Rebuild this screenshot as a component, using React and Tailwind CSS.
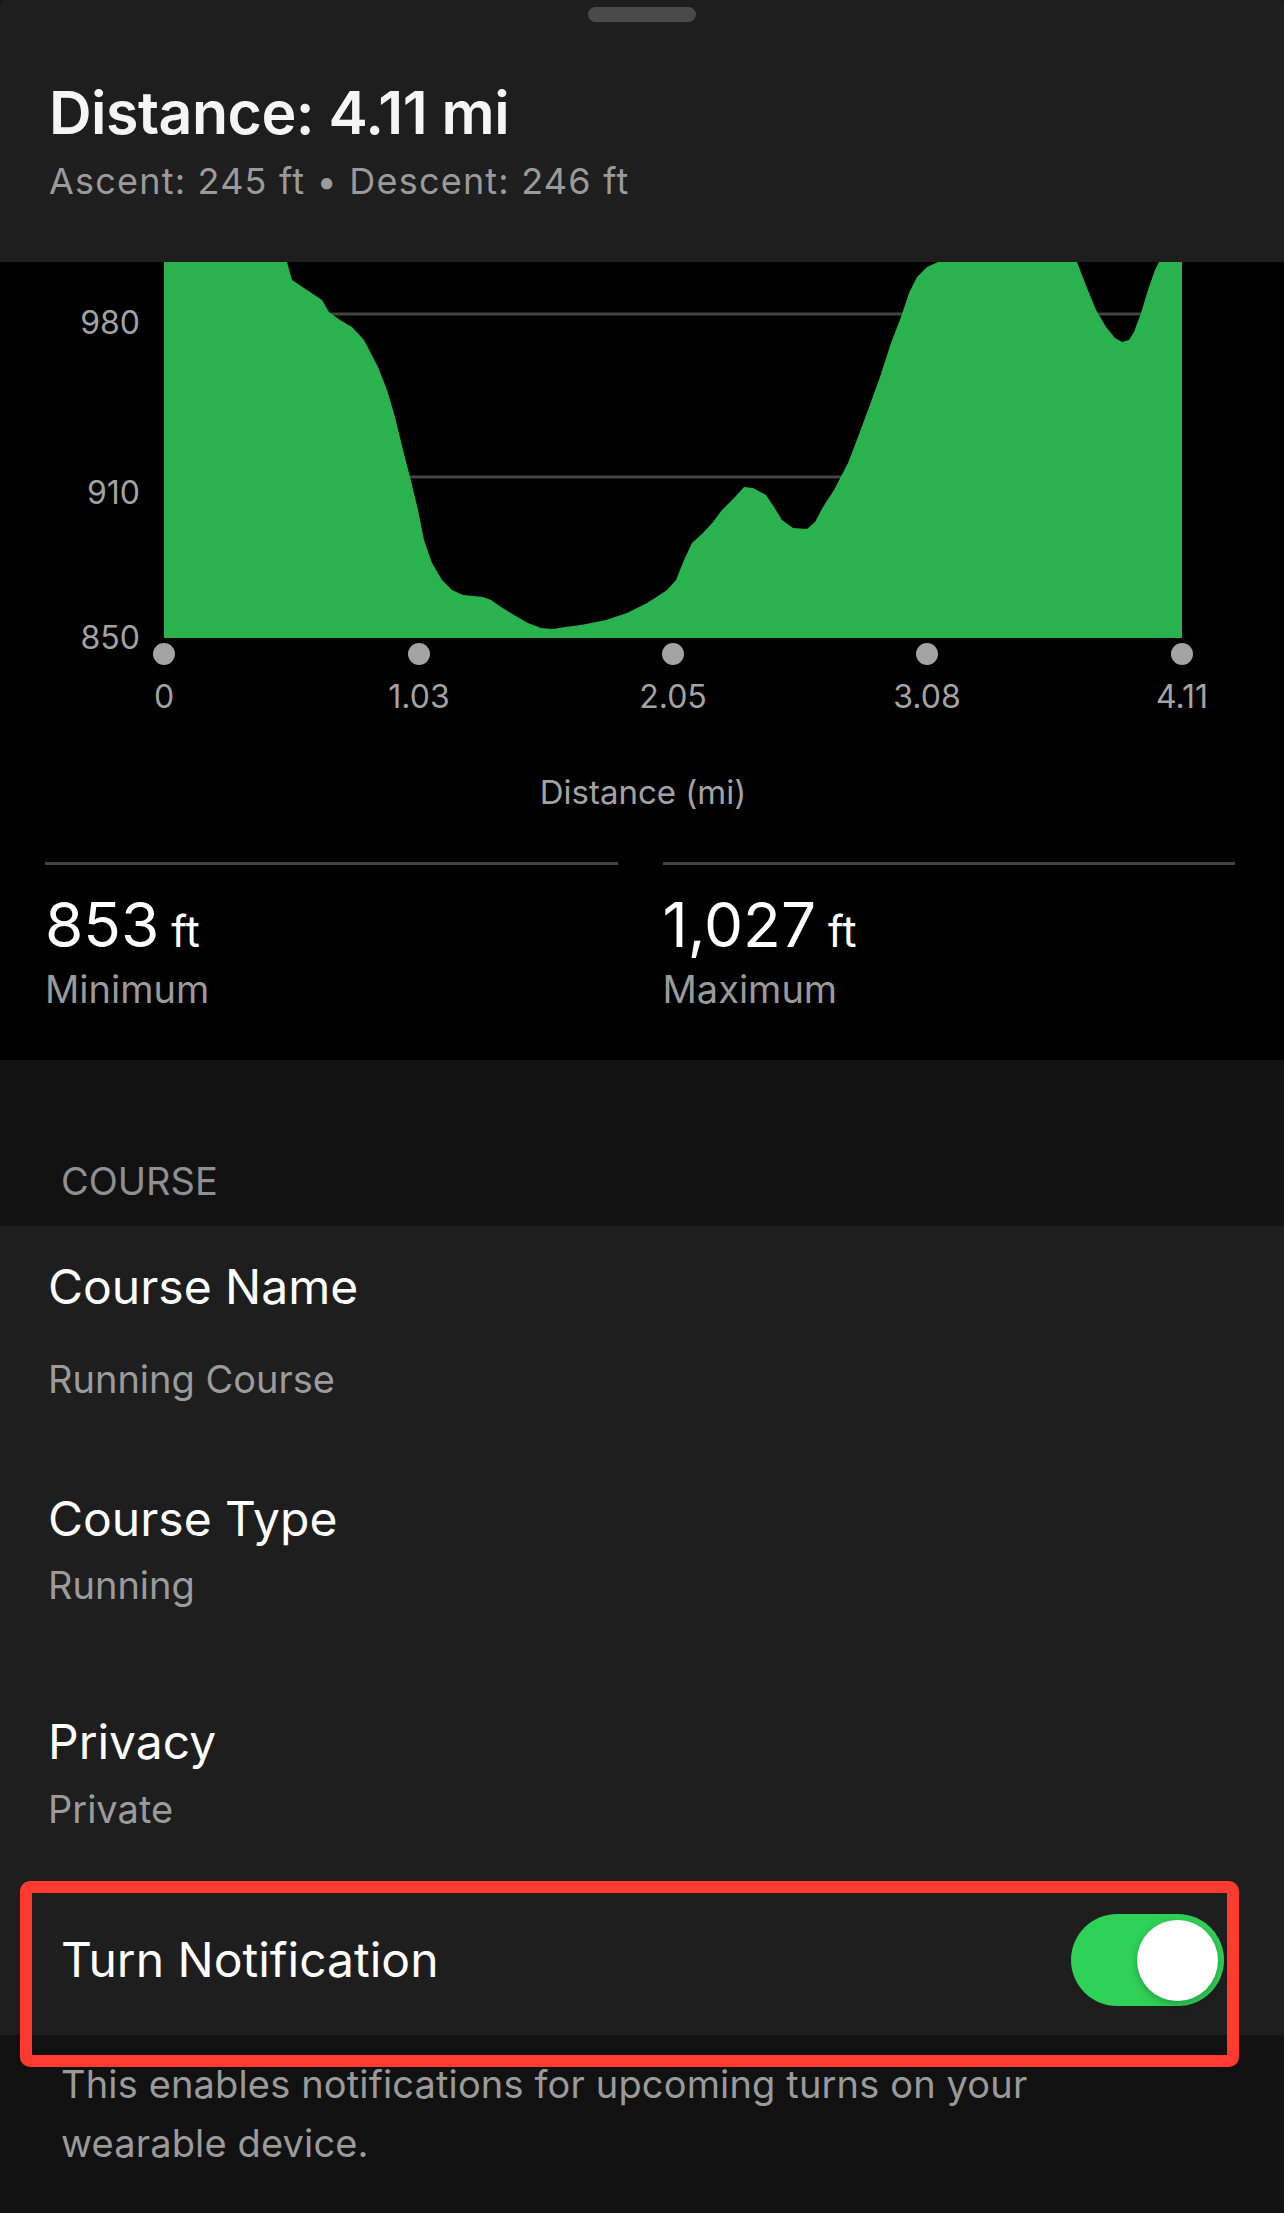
import React from "react";

const PTS = [
  [287, 262], [292, 280], [307, 290], [322, 300], [329, 312], [340, 320], [352, 327],
  [364, 340], [378, 367], [387, 390], [395, 417], [403, 450], [410, 477], [418, 510],
  [424, 540], [432, 563], [442, 580], [452, 590], [463, 595], [483, 597], [491, 600],
  [501, 607], [514, 615], [528, 623], [541, 628], [553, 629], [565, 627], [581, 625],
  [606, 620], [627, 613], [647, 603], [655, 598], [667, 590], [676, 580], [684, 560],
  [692, 543], [703, 533], [713, 522], [722, 510], [735, 497], [744, 487], [753, 488],
  [766, 495], [774, 507], [782, 520], [793, 528], [807, 529], [815, 522], [823, 507],
  [834, 490], [848, 463], [858, 437], [868, 410], [880, 377], [891, 343], [901, 317],
  [909, 293], [917, 277], [927, 267], [938, 262],
  [1077, 262], [1085, 283], [1096, 310], [1106, 327], [1115, 338], [1122, 342],
  [1129, 340], [1134, 332], [1141, 313], [1148, 290], [1155, 270], [1159, 262],
];

const TOP = 262;
const areaPath =
  "M164 376 L164 0 " +
  PTS.map(([x, y]) => `L${x} ${y - TOP}`).join(" ") +
  " L1182 0 L1182 376 Z";

const xTicks = [
  { x: 164, label: "0" },
  { x: 419, label: "1.03" },
  { x: 673, label: "2.05" },
  { x: 927, label: "3.08" },
  { x: 1182, label: "4.11" },
];

function ElevationChart() {
  return (
    <svg width="1284" height="460" viewBox="0 0 1284 460" className="block">
      <line x1="164" x2="1182" y1="52" y2="52" stroke="#444444" strokeWidth="3" />
      <line x1="164" x2="1182" y1="215" y2="215" stroke="#444444" strokeWidth="3" />
      <path d={areaPath} fill="#2ab24f" />
      <g fill="#a3a3a3" fontSize="32" fontFamily="Inter, 'Noto Sans', sans-serif">
        <text x="140" y="72" textAnchor="end">980</text>
        <text x="140" y="242" textAnchor="end">910</text>
        <text x="140" y="387" textAnchor="end">850</text>
        {xTicks.map((t) => (
          <g key={t.label}>
            <circle cx={t.x} cy="392" r="11" />
            <text x={t.x} y="446" textAnchor="middle">{t.label}</text>
          </g>
        ))}
      </g>
    </svg>
  );
}

function Stat({ value, label }) {
  return (
    <div className="flex-1">
      <div className="h-[3px] bg-[#444444]" />
      <div className="mt-[29px] flex items-baseline gap-[12px] text-white leading-none">
        <span className="text-[62px] leading-none">{value}</span>
        <span className="text-[43px] leading-none">ft</span>
      </div>
      <div className="mt-[14px] text-[38px] leading-none text-[#9a9a9a]">{label}</div>
    </div>
  );
}

function Row({ title, value, gap, top }) {
  return (
    <div className={top}>
      <div className="text-[48px] leading-none text-white">{title}</div>
      <div className={`${gap} text-[38px] leading-none text-[#9b9b9b]`}>{value}</div>
    </div>
  );
}

export default function App() {
  return (
    <div className="w-[1284px] min-h-[2213px] bg-[#111111] font-['Inter','Noto_Sans',sans-serif] antialiased">
      {/* Header sheet */}
      <div className="h-[262px] bg-[#1e1e1e] rounded-t-[4px] flex flex-col px-[49px] pt-[7px]">
        <div className="self-center w-[108px] h-[15px] rounded-full bg-[#4a4a4a]" />
        <div className="mt-[61px] text-[59px] font-semibold leading-none tracking-[-0.5px] text-[#f5f5f5]">
          Distance: 4.11 mi
        </div>
        <div className="mt-[21px] text-[36px] leading-none tracking-[1.2px] text-[#9a9a9a]">
          Ascent: 245 ft • Descent: 246 ft
        </div>
      </div>

      {/* Chart */}
      <div className="h-[798px] bg-black flex flex-col">
        <ElevationChart />
        <div className="mt-[54px] text-center pl-[2px] text-[33px] leading-none text-[#a3a3a3]">
          Distance (mi)
        </div>
        <div className="mt-[53px] flex gap-[45px] pl-[45px] pr-[49px]">
          <Stat value="853" label="Minimum" />
          <Stat value="1,027" label="Maximum" />
        </div>
      </div>

      {/* Section header */}
      <div className="h-[166px] bg-[#111111] px-[61px] pt-[102px]">
        <div className="text-[38px] leading-none text-[#8e8e93]">COURSE</div>
      </div>

      {/* List */}
      <div className="bg-[#1e1e1e] px-[48px]">
        <Row top="pt-[37px]" title="Course Name" value="Running Course" gap="mt-[49px]" />
        <Row top="pt-[97px]" title="Course Type" value="Running" gap="mt-[23px]" />
        <Row top="pt-[114px]" title="Privacy" value="Private" gap="mt-[24px]" />
      </div>
      <div className="bg-[#1e1e1e] pt-[57px]">
        <div className="relative h-[150px] flex items-center justify-between pl-[61px] pr-[60px]">
          <span className="text-[48px] leading-none text-white">Turn Notification</span>
          <div className="w-[153px] h-[92px] rounded-full bg-[#30d158] flex items-center justify-end pr-[6px]">
            <div className="w-[81px] h-[81px] rounded-full bg-white shadow-[0_3px_8px_rgba(0,0,0,0.25)]" />
          </div>
          <div className="absolute left-[20px] top-[-4px] w-[1219px] h-[186px] border-[12px] border-[#ff3b30] rounded-[10px] z-10 pointer-events-none" />
        </div>
      </div>

      {/* Footer */}
      <div className="px-[61px] pt-[20px] text-[38px] leading-[59px] tracking-[0.15px] text-[#9a9a9a]">
        This enables notifications for upcoming turns on your
        <br />
        wearable device.
      </div>
    </div>
  );
}
